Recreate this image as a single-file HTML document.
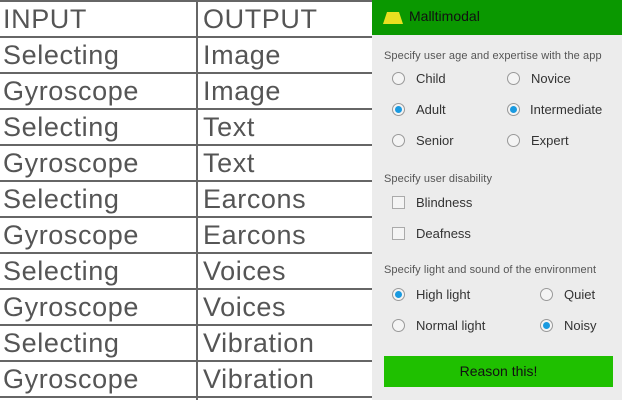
<!DOCTYPE html>
<html><head><style>
body{margin:0;width:622px;height:400px;background:#fff;position:relative;overflow:hidden;font-family:"Liberation Sans",sans-serif}
.tbl{position:absolute;left:0;top:0;width:372px;height:400px}
.hl{position:absolute;left:0;width:372px;height:2px;background:#666}
.vl{position:absolute;top:0;left:196px;width:2px;height:400px;background:#666}
.c{position:absolute;font-size:27px;color:#555;line-height:36px;letter-spacing:0.6px}
.panel{position:absolute;left:372px;top:0;width:250px;height:400px;background:#ececec}
.hdr{position:absolute;left:0;top:0;width:250px;height:35px;background:#0a9800}
.lbl{position:absolute;font-size:11px;color:#555;letter-spacing:0.1px}
.opt{position:absolute;font-size:13px;color:#333}
.r{position:absolute;width:11px;height:11px;border:1px solid #999;border-radius:50%;background:#f4f4f4}
.r.on::after{content:"";position:absolute;left:2px;top:2px;width:7px;height:7px;border-radius:50%;background:#1a9ae0}
.cb{position:absolute;width:11px;height:11px;border:1px solid #aaa;background:#f4f4f4}
</style></head><body>
<div class="tbl">
<div class="vl"></div>
<div class="hl" style="top:0"></div><div class="hl" style="top:36px"></div><div class="hl" style="top:72px"></div><div class="hl" style="top:108px"></div><div class="hl" style="top:144px"></div><div class="hl" style="top:180px"></div><div class="hl" style="top:216px"></div><div class="hl" style="top:252px"></div><div class="hl" style="top:288px"></div><div class="hl" style="top:324px"></div><div class="hl" style="top:360px"></div><div class="hl" style="top:396px"></div>
<div class="c" style="left:3px;top:1px">INPUT</div><div class="c" style="left:203px;top:1px">OUTPUT</div>
<div class="c" style="left:3px;top:37px">Selecting</div><div class="c" style="left:203px;top:37px">Image</div>
<div class="c" style="left:3px;top:73px">Gyroscope</div><div class="c" style="left:203px;top:73px">Image</div>
<div class="c" style="left:3px;top:109px">Selecting</div><div class="c" style="left:203px;top:109px">Text</div>
<div class="c" style="left:3px;top:145px">Gyroscope</div><div class="c" style="left:203px;top:145px">Text</div>
<div class="c" style="left:3px;top:181px">Selecting</div><div class="c" style="left:203px;top:181px">Earcons</div>
<div class="c" style="left:3px;top:217px">Gyroscope</div><div class="c" style="left:203px;top:217px">Earcons</div>
<div class="c" style="left:3px;top:253px">Selecting</div><div class="c" style="left:203px;top:253px">Voices</div>
<div class="c" style="left:3px;top:289px">Gyroscope</div><div class="c" style="left:203px;top:289px">Voices</div>
<div class="c" style="left:3px;top:325px">Selecting</div><div class="c" style="left:203px;top:325px">Vibration</div>
<div class="c" style="left:3px;top:361px">Gyroscope</div><div class="c" style="left:203px;top:361px">Vibration</div>
</div>
<div class="panel">
<div class="hdr">
<div style="position:absolute;left:11px;top:12px;width:20px;height:12px;background:#e8e020;clip-path:polygon(20% 0,80% 0,100% 100%,0 100%)"></div>
<div style="position:absolute;left:37px;top:8px;font-size:14px;color:#111">Malltimodal</div>
</div>
<div class="lbl" style="left:12px;top:50px">Specify user age and expertise with the app</div>
<div class="r" style="left:20px;top:72px"></div><div class="opt" style="left:44px;top:71px">Child</div>
<div class="r" style="left:135px;top:72px"></div><div class="opt" style="left:159px;top:71px">Novice</div>
<div class="r on" style="left:20px;top:103px"></div><div class="opt" style="left:44px;top:102px">Adult</div>
<div class="r on" style="left:135px;top:103px"></div><div class="opt" style="left:158px;top:102px">Intermediate</div>
<div class="r" style="left:20px;top:134px"></div><div class="opt" style="left:44px;top:133px">Senior</div>
<div class="r" style="left:135px;top:134px"></div><div class="opt" style="left:159px;top:133px">Expert</div>
<div class="lbl" style="left:12px;top:173px">Specify user disability</div>
<div class="cb" style="left:20px;top:196px"></div><div class="opt" style="left:44px;top:195px">Blindness</div>
<div class="cb" style="left:20px;top:227px"></div><div class="opt" style="left:44px;top:226px">Deafness</div>
<div class="lbl" style="left:12px;top:264px">Specify light and sound of the environment</div>
<div class="r on" style="left:20px;top:288px"></div><div class="opt" style="left:44px;top:287px">High light</div>
<div class="r" style="left:168px;top:288px"></div><div class="opt" style="left:192px;top:287px">Quiet</div>
<div class="r" style="left:20px;top:319px"></div><div class="opt" style="left:44px;top:318px">Normal light</div>
<div class="r on" style="left:168px;top:319px"></div><div class="opt" style="left:192px;top:318px">Noisy</div>
<div style="position:absolute;left:12px;top:356px;width:229px;height:31px;background:#1fc000;text-align:center;line-height:31px;font-size:14px;color:#111">Reason this!</div>
</div>
</body></html>
